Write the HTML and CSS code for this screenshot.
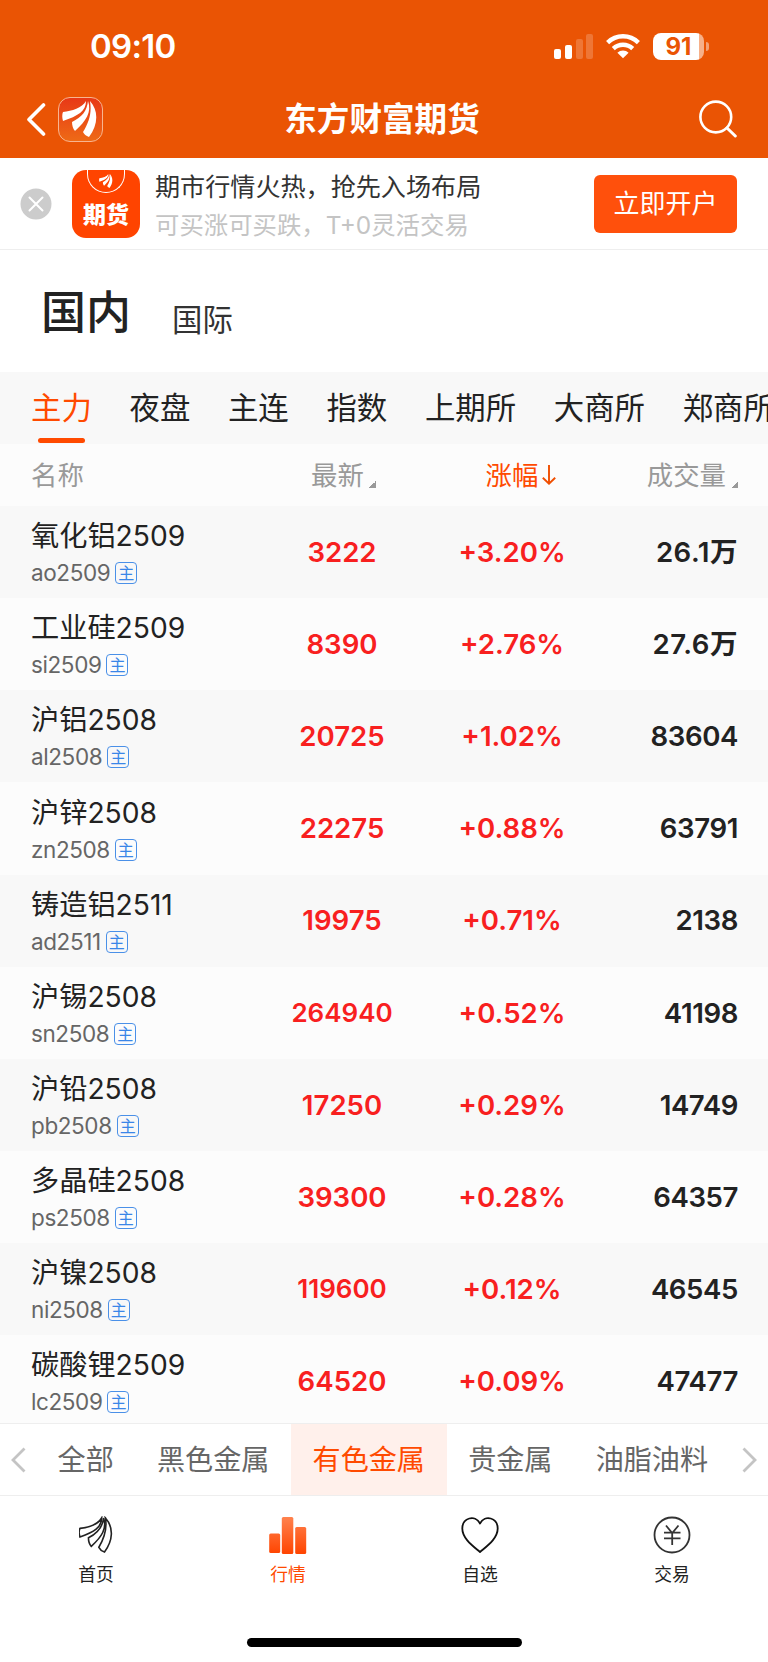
FILE: index.html
```html
<!DOCTYPE html>
<html lang="zh-CN">
<head>
    <meta charset="UTF-8">
    <meta name="viewport" content="width=device-width, initial-scale=1.0">
    <title>东方财富期货</title>
    <link rel="stylesheet" href="styles.css">
</head>
<body>

    <svg class="defs" width="0" height="0">
        <!-- 三片羽毛标志 -->
        <symbol id="feather" viewBox="0 0 36 38">
            <path d="M1 12 C10 11 20 8 24 1 C24 11 16 16 1 21 C0 18 0 14 1 12Z" />
            <path d="M10 22 C20 17 25 11 26 1 C30 12 24 21 13 31 C11 29 10 25 10 22Z" />
            <path d="M21 32 C27 22 30 13 28 1 C37 11 36 25 27 37 C24 36 22 34 21 32Z" />
        </symbol>
    </svg>

    <header>
        <div class="status">
            <span class="time">09:10</span>
            <div class="status-icons">
                <svg width="39" height="25" viewBox="0 0 39 25" fill="#fff">
                    <rect x="0" y="15" width="7" height="10" rx="2" />
                    <rect x="11" y="11" width="7" height="14" rx="2" />
                    <rect x="22" y="5" width="7" height="20" rx="2" opacity=".2" />
                    <rect x="32" y="0" width="7" height="25" rx="2" opacity=".2" />
                </svg>
                <svg width="34" height="26" viewBox="0 0 34 26" fill="none" stroke="#fff" stroke-width="4.4">
                    <path d="M1.6 9.6 A22 22 0 0 1 32.4 9.6" />
                    <path d="M7.3 15.6 A14 14 0 0 1 26.7 15.6" />
                    <path d="M17 25.2 L11.4 19.8 A8.2 8.2 0 0 1 22.6 19.8Z" fill="#fff" stroke="none" />
                </svg>
                <div class="battery"><span>91</span></div>
                <i class="battery-tip"></i>
            </div>
        </div>
        <div class="title-bar">
            <div class="title-left">
                <svg width="19" height="33" viewBox="0 0 19 33" fill="none" stroke="#fff" stroke-width="3.6" stroke-linecap="round" stroke-linejoin="round">
                    <path d="M16.5 2 L2 16.5 L16.5 31" />
                </svg>
                <div class="app-logo"><svg width="36" height="38" fill="#fff"><use href="#feather" /></svg></div>
            </div>
            <h1>东方财富期货</h1>
            <svg class="search" width="38" height="38" viewBox="0 0 38 38" fill="none" stroke="#fff" stroke-width="2.6" stroke-linecap="round">
                <circle cx="16.8" cy="17" r="15.4" />
                <path d="M28 28 L36.3 36" stroke-width="3" />
            </svg>
        </div>
    </header>

    <div class="banner">
        <svg width="32" height="32" viewBox="0 0 32 32">
            <circle cx="16" cy="16" r="15.5" fill="#ccc" />
            <path d="M9.5 9.5 L22.5 22.5 M22.5 9.5 L9.5 22.5" stroke="#fff" stroke-width="2" stroke-linecap="round" />
        </svg>
        <div class="banner-logo">
            <div class="half-circle"><svg width="14" height="16" fill="#fff"><use href="#feather" /></svg></div>
            <b>期货</b>
        </div>
        <div class="banner-text">
            <p>期市行情火热，抢先入场布局</p>
            <p class="sub">可买涨可买跌，T+0灵活交易</p>
        </div>
        <button>立即开户</button>
    </div>

    <div class="market">
        <span class="current">国内</span>
        <span class="other">国际</span>
    </div>

    <nav class="tabs">
        <a class="active">主力</a>
        <a>夜盘</a>
        <a>主连</a>
        <a>指数</a>
        <a>上期所</a>
        <a>大商所</a>
        <a>郑商所</a>
    </nav>

    <div class="row head">
        <span>名称</span>
        <span class="price">最新<i class="corner"></i></span>
        <span class="change">涨幅<svg width="14" height="20" viewBox="0 0 14 20" fill="none" stroke="#f04e00" stroke-width="1.9"><path d="M7 0 V18.5 M.8 12.8 L7 18.7 L13.2 12.8" /></svg></span>
        <span class="volume">成交量<i class="corner"></i></span>
    </div>

    <div class="list" id="list"></div>

    <div class="sectors">
        <svg width="15" height="26" viewBox="0 0 15 26" fill="none" stroke="#c4c4c4" stroke-width="2.8"><path d="M13.5 1.5 L2 13 L13.5 24.5" /></svg>
        <a>全部</a>
        <a>黑色金属</a>
        <a class="active">有色金属</a>
        <a>贵金属</a>
        <a>油脂油料</a>
        <svg width="15" height="26" viewBox="0 0 15 26" fill="none" stroke="#c4c4c4" stroke-width="2.8"><path d="M1.5 1.5 L13 13 L1.5 24.5" /></svg>
    </div>

    <footer>
        <a>
            <svg width="38" height="38" viewBox="0 0 38 38" fill="none" stroke="#222" stroke-width="1.7"><use href="#feather" x="2" width="34" height="38" /></svg>
            首页
        </a>
        <a class="active">
            <svg width="38" height="38" viewBox="0 0 38 38" fill="url(#bars)">
                <defs>
                    <linearGradient id="bars" gradientUnits="userSpaceOnUse" x1="0" y1="0" x2="0" y2="38">
                        <stop offset="0" stop-color="#ff8450" />
                        <stop offset="1" stop-color="#ff4400" />
                    </linearGradient>
                </defs>
                <rect x="0.2" y="17.5" width="11" height="19.5" rx="1.5" />
                <rect x="12.8" y="1" width="11.5" height="37" rx="1.5" />
                <rect x="26.2" y="11" width="11" height="27" rx="1.5" />
            </svg>
            行情
        </a>
        <a>
            <svg width="38" height="38" viewBox="0 0 38 38" fill="none" stroke="#111" stroke-width="1.8" stroke-linejoin="round">
                <path d="M19 36 C12 30 1.3 22.5 1.3 12.5 C1.3 2 14 -2 19 7.5 C24 -2 36.7 2 36.7 12.5 C36.7 22.5 26 30 19 36Z" />
            </svg>
            自选
        </a>
        <a>
            <svg width="38" height="38" viewBox="0 0 38 38" fill="none" stroke="#333" stroke-width="1.8">
                <circle cx="19" cy="19" r="17.5" />
                <path d="M13 9.5 L19.2 17 L25.5 9.5 M11 16.7 H27.5 M11 22.3 H27.5 M19.2 16.5 V29" />
            </svg>
            交易
        </a>
    </footer>
    <div class="home-bar"></div>

    <script>
        // 名称, 代码, 最新, 涨幅, 成交量
        const data = [
            ['氧化铝2509', 'ao2509', '3222', '+3.20%', '26.1万'],
            ['工业硅2509', 'si2509', '8390', '+2.76%', '27.6万'],
            ['沪铝2508', 'al2508', '20725', '+1.02%', '83604'],
            ['沪锌2508', 'zn2508', '22275', '+0.88%', '63791'],
            ['铸造铝2511', 'ad2511', '19975', '+0.71%', '2138'],
            ['沪锡2508', 'sn2508', '264940', '+0.52%', '41198'],
            ['沪铅2508', 'pb2508', '17250', '+0.29%', '14749'],
            ['多晶硅2508', 'ps2508', '39300', '+0.28%', '64357'],
            ['沪镍2508', 'ni2508', '119600', '+0.12%', '46545'],
            ['碳酸锂2509', 'lc2509', '64520', '+0.09%', '47477']
        ];

        // 六位数价格用小一号字
        document.getElementById('list').innerHTML = data.map(d => `
            <div class="row">
                <div class="name">${d[0]}<div class="code">${d[1]}<i>主</i></div></div>
                <span class="price${d[2].length > 5 ? ' long' : ''}">${d[2]}</span>
                <span class="change">${d[3]}</span>
                <span class="volume${d[4].endsWith('万') ? ' wan' : ''}">${d[4]}</span>
            </div>`).join('');
    </script>
</body>
</html>
```
FILE: styles.css
```css
* {
    box-sizing: border-box;
}
body {
    margin: 0;
    width: 768px;
    height: 1662px;
    overflow: hidden;
    display: flex;
    flex-direction: column;
    background-color: #fff;
    color: #222;
    font-family: Inter, "Noto Sans CJK SC", sans-serif;
    line-height: 1.4;
}
svg {
    display: block;
    flex: none;
}
i {
    font-style: normal;
}
.defs {
    position: absolute;
}

/* 顶部 */
header {
    height: 158px;
    flex: none;
    background-color: #ea5404;
    color: #fff;
}
.status {
    height: 80px;
    padding: 12px 59px 0 90px;
    display: flex;
    justify-content: space-between;
    align-items: center;
}
.time {
    font-size: 33px;
    font-weight: 600;
    letter-spacing: -0.7px;
}
.status-icons {
    display: flex;
    align-items: center;
}
.status-icons svg {
    margin-right: 13px;
}
.battery {
    width: 51px;
    height: 27px;
    border-radius: 8px;
    background: linear-gradient(90deg, #fff 46px, #f6b08a 46px);
    color: #ea5404;
    font-size: 24px;
    font-weight: 700;
    line-height: 27px;
    text-align: center;
}
.battery-tip {
    width: 3px;
    height: 9px;
    margin-left: 2px;
    border-radius: 0 4px 4px 0;
    background-color: #f4a075;
}
.title-bar {
    height: 78px;
    padding: 0 31px 0 27px;
    display: grid;
    grid-template-columns: 1fr auto 1fr;
    align-items: center;
}
.title-left {
    display: flex;
    align-items: center;
    gap: 12px;
}
.app-logo {
    width: 45px;
    height: 45px;
    padding: 2px 0 0 3px;
    border: 1px solid #f8b590;
    border-radius: 12px;
    background: linear-gradient(#e83817, #ee6a16);
}
h1 {
    margin: 0;
    padding-top: 2px;
    font-size: 32.6px;
    font-weight: 700;
}
.search {
    justify-self: end;
}

/* 开户横幅 */
.banner {
    height: 92px;
    flex: none;
    display: flex;
    align-items: center;
    padding: 0 31px 0 20px;
    border-bottom: 1px solid #eee;
}
.banner-logo {
    width: 68px;
    height: 68px;
    margin: 0 15px 0 20px;
    border-radius: 14px;
    background-color: #ff4400;
    color: #fff;
    overflow: hidden;
    text-align: center;
}
.banner-logo b {
    display: block;
    margin-top: 5px;
    font-size: 23px;
    line-height: 34px;
    font-weight: 900;
}
.half-circle {
    width: 38px;
    height: 23px;
    margin: 0 auto;
    padding: 3px 0 0 11px;
    border: 1.5px solid #fff;
    border-top: 0;
    border-radius: 0 0 19px 19px;
}
.banner-text {
    padding-top: 5px;
}
.banner-text p {
    margin: 0;
    font-size: 25.1px;
    line-height: 38px;
    color: #333;
}
.banner-text .sub {
    font-size: 24.4px;
    color: #c4c4c4;
}
.banner button {
    width: 143px;
    height: 58px;
    margin-left: auto;
    padding: 0;
    border: 0;
    border-radius: 6px;
    background-color: #ff500c;
    color: #fff;
    font: 26px/58px Inter, "Noto Sans CJK SC", sans-serif;
}

.market {
    height: 122px;
    flex: none;
    display: flex;
    align-items: flex-start;
    gap: 41px;
    padding: 31px 0 0 41px;
    font-size: 30.4px;
    color: #333;
}
.market .current {
    font-size: 45px;
    line-height: 64px;
    font-weight: 500;
    color: #222;
}
.market .other {
    line-height: 78px;
}

/* 交易所标签 */
.tabs {
    height: 72px;
    flex: none;
    display: flex;
    gap: 37.7px;
    padding-left: 31px;
    background-color: #f8f8f8;
    font-size: 30.4px;
    line-height: 73px;
    white-space: nowrap;
    overflow: hidden;
}
.tabs a {
    position: relative;
    flex: none;
}
.tabs .active {
    color: #ff4a00;
}
.tabs .active::after {
    content: "";
    position: absolute;
    left: 7px;
    bottom: 1px;
    width: 47px;
    height: 5px;
    border-radius: 3px;
    background-color: #ff4a00;
}

/* 行情表 */
.row {
    height: 92.16px;
    display: grid;
    grid-template-columns: 225px 171px 170px 141px;
    align-items: center;
    padding-left: 31px;
    background-color: #fcfcfc;
}
.row:nth-child(odd) {
    background-color: #f8f8f8;
}
.row.head {
    height: 62px;
    flex: none;
    background-color: #fcfcfc;
    color: #999;
    font-size: 26.4px;
}
.price,
.change {
    text-align: center;
}
.volume {
    text-align: right;
}
.head .price,
.head .change,
.head .volume {
    display: flex;
    justify-content: center;
    align-items: center;
}
.head .price {
    padding-left: 4px;
}
.head .change {
    padding-left: 18px;
    color: #ff4a00;
    gap: 4px;
}
.head .volume {
    justify-content: flex-end;
}
.corner {
    width: 7px;
    height: 7px;
    margin: 19px 0 0 5px;
    background: linear-gradient(135deg, transparent 50%, #999 50%);
}
.list {
    height: 917px;
    flex: none;
    overflow: hidden;
}
.name {
    padding-top: 3px;
    font-size: 28.2px;
    line-height: 39px;
}
.code {
    display: flex;
    align-items: center;
    gap: 5px;
    font-size: 22.5px;
    letter-spacing: -0.4px;
    line-height: 34px;
    color: #666;
}
.code i {
    width: 22px;
    height: 22px;
    border: 1px solid #4a90e8;
    border-radius: 4px;
    color: #3a86e8;
    font-size: 16px;
    letter-spacing: 0;
    line-height: 20px;
    text-align: center;
}
.list .price,
.list .change,
.list .volume {
    font-size: 27.6px;
    font-weight: 600;
}
.list .price,
.list .change {
    color: #f8201f;
}
.list .price {
    padding-left: 1px;
}
.list .price.long {
    font-size: 26px;
}
.list .volume {
    letter-spacing: -0.4px;
}
.list .volume.wan {
    letter-spacing: 0.5px;
}

/* 板块 */
.sectors {
    height: 73px;
    flex: none;
    display: flex;
    align-items: center;
    padding: 0 11px;
    border-top: 1px solid #eee;
    border-bottom: 1px solid #eee;
    font-size: 28.1px;
    color: #666;
}
.sectors a {
    height: 71px;
    line-height: 72px;
    padding: 0 21.6px;
}
.sectors svg:first-child {
    margin-right: 10px;
}
.sectors svg:last-child {
    margin-left: auto;
}
.sectors .active {
    background-color: #fff0eb;
    color: #ff4a00;
}

/* 底部导航 */
footer {
    height: 142px;
    flex: none;
    display: grid;
    grid-template-columns: repeat(4, 1fr);
    padding-top: 20px;
}
footer a {
    display: flex;
    flex-direction: column;
    align-items: center;
    gap: 8px;
    font-size: 17.8px;
    line-height: 26px;
}
footer .active {
    color: #ff4a00;
}
.home-bar {
    width: 275px;
    height: 9px;
    flex: none;
    margin: 0 auto;
    border-radius: 5px;
    background-color: #000;
}
```
